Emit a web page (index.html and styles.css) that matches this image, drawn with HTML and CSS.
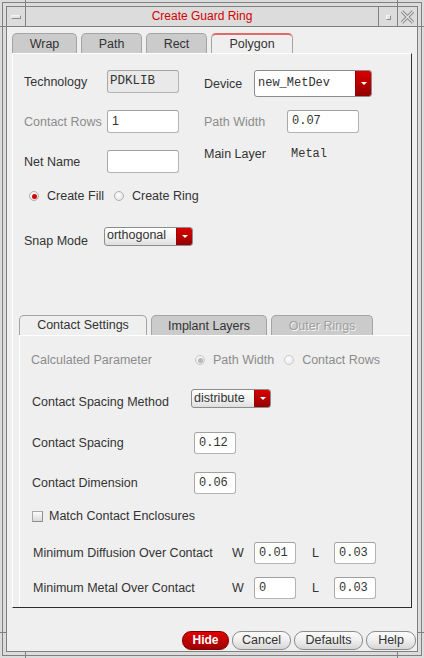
FILE: index.html
```html
<!DOCTYPE html>
<html>
<head>
<meta charset="utf-8">
<link rel="stylesheet" href="styles.css">
</head>
<body>
<div class="window">
  <div class="frame">
    <div class="inner">
      <div class="titlebar">
        <div class="tb-btn tb-menu"><span class="menu-icon"></span></div>
        <div class="title">Create Guard Ring</div>
        <div class="tb-btn tb-min"><span class="min-icon"></span></div>
        <div class="tb-btn tb-close">
          <svg width="15" height="14" viewBox="0 0 15 14">
            <path d="M2 1.5 L13 12.5 M13 1.5 L2 12.5" stroke="#8a8a8a" stroke-width="3.2" fill="none"/>
            <path d="M2 1.5 L13 12.5 M13 1.5 L2 12.5" stroke="#e4e4e4" stroke-width="1.2" fill="none"/>
          </svg>
        </div>
      </div>
      <div class="client">
        <div class="tabs">
          <div class="tab w-wrap">Wrap</div>
          <div class="tab w-path">Path</div>
          <div class="tab w-rect">Rect</div>
          <div class="tab w-poly active">Polygon</div>
        </div>
        <div class="panel">
          <div class="row r1">
            <div class="cell-l">
              <span class="lbl lw-l">Technology</span>
              <span class="field wide readonly mono">PDKLIB</span>
            </div>
            <div class="cell-r">
              <span class="lbl lw-dev">Device</span>
              <div class="combo combo-dev"><span class="combo-text mono">new_MetDev</span><span class="combo-btn"><i class="tri"></i></span></div>
            </div>
          </div>
          <div class="row r2">
            <div class="cell-l">
              <span class="lbl lw-l dis">Contact Rows</span>
              <span class="field wide">1</span>
            </div>
            <div class="cell-r">
              <span class="lbl lw-pw dis">Path Width</span>
              <span class="field wide num">0.07</span>
            </div>
          </div>
          <div class="row r3">
            <div class="cell-l">
              <span class="lbl lw-l">Net Name</span>
              <span class="field wide"></span>
            </div>
            <div class="cell-r top">
              <span class="lbl lw-ml">Main Layer</span>
              <span class="mono val">Metal</span>
            </div>
          </div>
          <div class="row radios">
            <span class="radio on"></span><span class="rtext">Create Fill</span>
            <span class="radio"></span><span class="rtext">Create Ring</span>
          </div>
          <div class="row snap">
            <span class="lbl lw-snap low">Snap Mode</span>
            <div class="combo combo-snap"><span class="combo-text hi">orthogonal</span><span class="combo-btn"><i class="tri"></i></span></div>
          </div>

          <div class="subtabs">
            <div class="tab sub-cs active sub">Contact Settings</div>
            <div class="tab sub-il">Implant Layers</div>
            <div class="tab sub-or disabled">Outer Rings</div>
          </div>
          <div class="subpanel">
            <div class="row calc">
              <span class="lbl lw-calc dis">Calculated Parameter</span>
              <span class="radio dis-on"></span><span class="rtext dis">Path Width</span>
              <span class="radio dis-off"></span><span class="rtext dis">Contact Rows</span>
            </div>
            <div class="row csm">
              <span class="lbl lw-csm low2">Contact Spacing Method</span>
              <div class="combo combo-dist"><span class="combo-text">distribute</span><span class="combo-btn"><i class="tri"></i></span></div>
            </div>
            <div class="row cs">
              <span class="lbl lw-cs">Contact Spacing</span>
              <span class="field small num">0.12</span>
            </div>
            <div class="row cd">
              <span class="lbl lw-cs">Contact Dimension</span>
              <span class="field small num">0.06</span>
            </div>
            <div class="row chk">
              <span class="checkbox"></span><span class="ctext">Match Contact Enclosures</span>
            </div>
            <div class="row md">
              <span class="lbl lw-md">Minimum Diffusion Over Contact</span>
              <span class="wl">W</span>
              <span class="field small num">0.01</span>
              <span class="wl l">L</span>
              <span class="field small num">0.03</span>
            </div>
            <div class="row mm">
              <span class="lbl lw-md">Minimum Metal Over Contact</span>
              <span class="wl">W</span>
              <span class="field small num">0</span>
              <span class="wl l">L</span>
              <span class="field small num">0.03</span>
            </div>
          </div>
        </div>
        <div class="buttons">
          <span class="btn hide">Hide</span>
          <span class="btn b-cancel">Cancel</span>
          <span class="btn b-def">Defaults</span>
          <span class="btn b-help">Help</span>
        </div>
      </div>
    </div>
  </div>
  <span class="tick v t1"></span>
  <span class="tick v t2"></span>
  <span class="tick v t3"></span>
  <span class="tick v t4"></span>
  <span class="tick h t5"></span>
  <span class="tick h t6"></span>
  <span class="tick h t7"></span>
  <span class="tick h t8"></span>
</div>
</body>
</html>
```

FILE: styles.css
```css
* { box-sizing: border-box; }
body { margin: 0; background: #dcdcdc; }

.window {
  position: relative;
  width: 424px;
  height: 658px;
  padding: 2px;
  background: #dcdcdc;
  font-family: "Liberation Sans", Arial, sans-serif;
  font-size: 12.5px;
  color: #333;
  overflow: hidden;
}
.frame {
  height: 100%;
  border: 1px solid #808080;
  padding: 3px;
  background: #dcdcdc;
}
.inner {
  height: 100%;
  border: 1px solid #808080;
  display: flex;
  flex-direction: column;
}

/* title bar */
.titlebar {
  flex: none;
  height: 20px;
  border-bottom: 1px solid #808080;
  display: flex;
  background: #dcdcdc;
}
.tb-btn { display: flex; align-items: center; justify-content: center; }
.tb-menu { width: 19px; border-right: 1px solid #808080; }
.menu-icon {
  width: 10px; height: 4px;
  border: 1px solid #8a8a8a;
  border-top-color: #f4f4f4; border-left-color: #f4f4f4;
  background: #e6e6e6;
  margin-top: 1px;
}
.title {
  flex: 1;
  text-align: center;
  color: #d40000;
  font-size: 12px;
  line-height: 19px;
}
.tb-min { width: 19px; border-left: 1px solid #808080; }
.min-icon {
  width: 5px; height: 5px;
  border: 1px solid #8a8a8a;
  border-top-color: #f6f6f6; border-left-color: #f6f6f6;
  background: #e4e4e4;
  margin-top: 1px;
}
.tb-close { width: 20px; border-left: 1px solid #808080; }

/* client */
.client {
  flex: 1;
  background: #efefef;
  padding: 6px 1px 0 5px;
  display: flex;
  flex-direction: column;
}

.tabs, .subtabs { display: flex; gap: 4px; height: 20px; flex: none; }
.tab {
  height: 20px;
  border: 1px solid #a4a4a4;
  border-bottom: none;
  border-radius: 5px 5px 0 0;
  background: #cbcbcb;
  text-align: center;
  line-height: 20px;
  color: #333;
}
.tab.active {
  background: #efefef;
  border-top: 2px solid #e06a6a;
  line-height: 18px;
}
.tab.active.sub { border-top: 1px solid #a4a4a4; line-height: 19px; }
.tab.disabled { color: #a0a0a0; text-shadow: 1px 1px 0 #f4f4f4; }
.w-wrap { width: 65px; }
.w-path { width: 61px; }
.w-rect { width: 61px; }
.w-poly { width: 82px; }

.panel {
  width: 400px;
  height: 555px;
  flex: none;
  border-top: 1px solid #ffffff;
  border-left: 1px solid #ffffff;
  border-right: 1px solid #2e2e2e;
  border-bottom: 1px solid #2e2e2e;
  display: flex;
  flex-direction: column;
  padding-top: 16px;
}

.row { display: flex; flex: none; }
.lbl { display: block; white-space: nowrap; }
.dis { color: #8c8c8c; }
.mono { font-family: "Liberation Mono", "Courier New", monospace; font-size: 12px; }

.r1, .r2, .r3 { margin-left: 11px; align-items: flex-start; }
.r1 { height: 27px; }
.r2 { height: 23px; margin-top: 13px; }
.r3 { height: 23px; margin-top: 17px; }
.cell-l { display: flex; align-items: center; width: 180px; height: 23px; }
.cell-r { display: flex; align-items: center; }
.r1 .cell-r { height: 27px; }
.cell-r.top { align-items: flex-start; margin-top: -3px; line-height: 14px; }
.lw-l { width: 83px; }
.lw-dev { width: 50px; }
.lw-pw { width: 83px; }
.lw-ml { width: 87px; }
.val { line-height: 14px; }

.field {
  display: block;
  height: 23px;
  background: #ffffff;
  border: 1px solid #b4b4b4;
  border-top-color: #a0a0a0;
  border-left-color: #a8a8a8;
  border-radius: 3px;
  padding-left: 4px;
  line-height: 21px;
  font-size: 12.5px;
  color: #333;
}
.field.wide { width: 72px; }
.field.small { width: 42px; height: 22px; line-height: 20px; }
.field.readonly { background: #e9e9e9; padding-left: 2px; }
.field.num { font-family: "Liberation Mono", "Courier New", monospace; font-size: 12px; }

/* combo */
.combo {
  display: flex;
  border: 1px solid #8c8c8c;
  border-radius: 3px;
  background: linear-gradient(#ffffff, #f2f2f2 55%, #dedede);
  overflow: hidden;
}
.combo-text { flex: 1; padding-left: 2px; white-space: nowrap; }
.combo-btn {
  width: 16px;
  background: linear-gradient(#d80000, #b00000 60%, #900000);
  display: flex;
  align-items: center;
  justify-content: center;
  border-left: 1px solid #a00000;
}
.tri {
  width: 0; height: 0;
  border-left: 3px solid transparent;
  border-right: 3px solid transparent;
  border-top: 3px solid #ffffff;
}
.combo-dev { width: 118px; height: 27px; background: #ffffff; }
.combo-dev .combo-text { line-height: 25px; padding-left: 3px; }
.combo-snap { width: 89px; height: 19px; }
.combo-snap .combo-text { line-height: 14px; }
.combo-dist { width: 80px; height: 19px; }
.combo-dist .combo-text { line-height: 16px; }

/* radios */
.radios { height: 14px; margin-top: 16px; margin-left: 16px; align-items: center; }
.radio {
  width: 10px; height: 10px;
  border-radius: 50%;
  border: 1px solid #b0b0b0;
  background: radial-gradient(circle at 40% 35%, #ffffff, #dcdcdc);
  display: flex; align-items: center; justify-content: center;
  flex: none;
}
.radio.on::after {
  content: "";
  width: 5px; height: 5px; border-radius: 50%;
  background: #d40000;
}
.radio.dis-on { border-color: #c8c8c8; }
.radio.dis-on::after {
  content: "";
  width: 5px; height: 5px; border-radius: 50%;
  background: #b8b8b8;
}
.radio.dis-off { border-color: #cccccc; background: radial-gradient(circle at 40% 35%, #ffffff, #e4e4e4); }
.rtext { margin-left: 8px; margin-right: 10px; white-space: nowrap; }

.snap { height: 19px; margin-top: 24px; margin-left: 11px; align-items: flex-start; }
.lw-snap { width: 80px; }
.low { line-height: 14px; padding-top: 6.5px; }

/* sub tabs */
.subtabs { margin-top: 69px; margin-left: 6px; }
.sub-cs { width: 128px; }
.sub-il { width: 116px; }
.sub-or { width: 102px; }
.subpanel {
  flex: 1;
  margin-left: 6px;
  margin-right: 1px;
  margin-bottom: 1px;
  border-top: 1px solid #ffffff;
  border-left: 1px solid #ffffff;
  display: flex;
  flex-direction: column;
  padding-top: 14px;
}
.calc { height: 20px; margin-left: 11px; align-items: center; }
.lw-calc { width: 164px; }
.csm { height: 19px; margin-top: 19px; margin-left: 12px; align-items: flex-start; }
.lw-csm { width: 159px; }
.low2 { line-height: 14px; padding-top: 6px; }
.cs, .cd { height: 22px; margin-left: 12px; align-items: center; }
.cs { margin-top: 24px; }
.cd { margin-top: 18px; }
.lw-cs { width: 162px; }
.chk { height: 14px; margin-top: 15px; margin-left: 12px; align-items: center; }
.checkbox {
  width: 11px; height: 11px;
  border: 1px solid #a8a8a8;
  border-bottom-color: #8c8c8c; border-right-color: #8c8c8c;
  background: linear-gradient(#fbfbfb, #dadada);
  flex: none;
}
.ctext { margin-left: 6px; }
.md, .mm { height: 22px; margin-left: 13px; align-items: center; }
.md { margin-top: 19px; }
.mm { margin-top: 13px; }
.lw-md { width: 199px; }
.wl { width: 22px; }
.wl.l { margin-left: 16px; }

/* buttons */
.buttons {
  flex: none;
  display: flex;
  justify-content: flex-end;
  gap: 3px;
  margin-top: 23px;
  height: 19px;
}
.btn {
  display: block;
  height: 19px;
  border: 1px solid #8c8c8c;
  border-radius: 9px;
  background: linear-gradient(#fbfbfb, #eeeeee 50%, #d6d6d6);
  text-align: center;
  line-height: 17px;
  color: #333;
}
.btn.hide {
  width: 47px;
  background: linear-gradient(#e00000, #c00000 50%, #9a0000);
  border-color: #800000;
  color: #ffffff;
  font-weight: bold;
  font-size: 12px;
}
.b-cancel { width: 59px; }
.b-def { width: 69px; }
.b-help { width: 50px; }

/* resize-corner ticks over the frame */
.tick { position: absolute; background: #808080; }
.tick.v { width: 1px; height: 7px; }
.tick.h { height: 1px; width: 7px; }
.t1 { left: 25px; top: 0; }
.t2 { left: 397px; top: 0; }
.t3 { left: 25px; bottom: 0; }
.t4 { left: 397px; bottom: 0; }
.t5 { left: 0; top: 26px; }
.t6 { right: 0; top: 26px; }
.t7 { left: 0; top: 632px; }
.t8 { right: 0; top: 632px; }
```
